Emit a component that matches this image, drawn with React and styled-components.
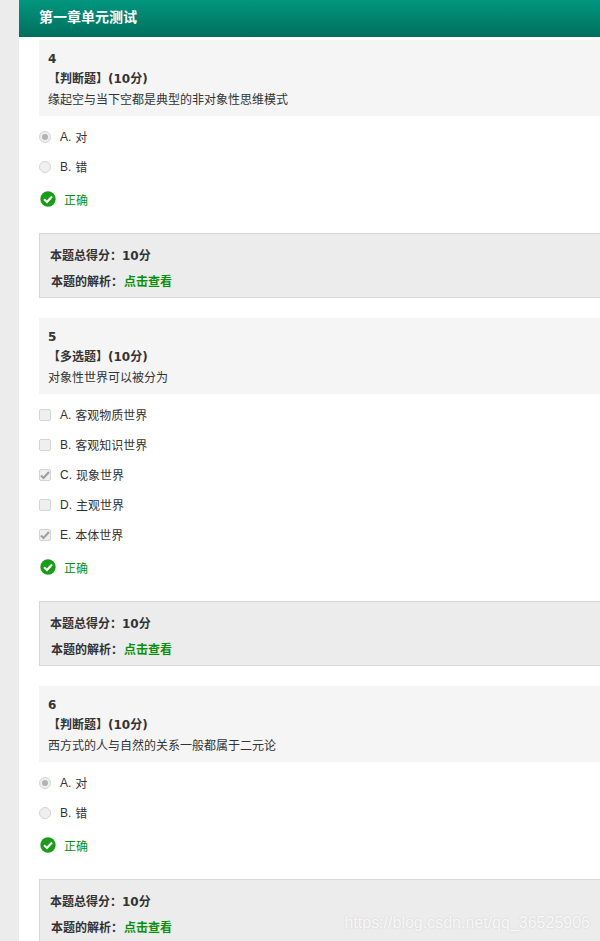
import styled, {createGlobalStyle} from 'styled-components'

const font = `"Liberation Sans", "Noto Sans CJK SC", sans-serif`
const boldFont = `"DejaVu Sans", "Noto Sans CJK SC", sans-serif`

const Global = createGlobalStyle`
	html, body {
		margin: 0;
		height: 941px;
		overflow: hidden;
		background: #fff;
	}
	body {
		font-family: ${font};
		color: #333;
	}
`

const Page = styled.div`
	position: relative;
	height: 941px;
	overflow: hidden;
	border-left: 19px solid #ececec;
	box-sizing: border-box;
`

const Header = styled.h1`
	margin: 0 0 3px;
	height: 37px;
	padding-left: 20px;
	background: linear-gradient(#01967f, #006f5d);
	color: #fff;
	font-size: 14px;
	font-weight: bold;
	line-height: 34px;
`

const List = styled.div`
	padding-left: 20px;
`

const Question = styled.section`
	margin-bottom: 20px;
`

const Head = styled.div`
	height: 76px;
	box-sizing: border-box;
	padding: 9px 9px 0;
	background: #f5f5f5;
	font-size: 12px;
	line-height: 20px;
`

const Number = styled.div`
	font-family: ${boldFont};
	font-weight: bold;
`

const Kind = styled.div`
	font-family: ${boldFont};
	font-weight: bold;
`

const Text = styled.div`
	margin-top: 1px;
`

const Options = styled.div`
	margin-top: 6px;
`

const Option = styled.div`
	display: flex;
	align-items: center;
	height: 30px;
	font-size: 12px;
`

const Control = styled.span`
	display: flex;
	align-items: center;
	justify-content: center;
	width: 10px;
	height: 10px;
	margin-right: 9px;
	border: 1px solid #d4d4d4;
	border-radius: ${({$round}) => $round ? '50%' : '2px'};
	background: #efefef;
`

const Dot = styled.span`
	width: 6px;
	height: 6px;
	border-radius: 50%;
	background: #b2b2b2;
`

const Letter = styled.span`
	margin-right: 4px;
`

const Label = styled.span`
	position: relative;
	top: -1px;
`

const Result = styled.div`
	display: flex;
	align-items: center;
	height: 34px;
	margin-bottom: 17px;
	padding-left: 1px;
	color: #0a8f0a;
	font-size: 12px;
	gap: 8px;
`

const Score = styled.div`
	height: 65px;
	box-sizing: border-box;
	padding: 9px 10px 0;
	border: 1px solid #d7d7d7;
	border-right: 0;
	background: #ececec;
	font-family: ${boldFont};
	font-size: 12px;
	font-weight: bold;
	line-height: 26px;
`

const ScoreLine = styled.div`
	& + & {
		padding-left: 1px;
	}
`

const Link = styled.span`
	margin-left: 1px;
	color: #0a8f0a;
`

const Watermark = styled.div`
	position: absolute;
	right: 10px;
	bottom: 9px;
	color: #fff;
	opacity: .6;
	font-size: 16px;
	text-shadow: 0 0 2px #bbb;
`

const Check = () =>
	<svg width="16" height="16" viewBox="0 0 16 16">
		<circle cx="8" cy="8" r="7.7" fill="#1a9c1a"/>
		<path d="M4 8.2 7 11 12 5.6" fill="none" stroke="#fff" strokeWidth="2.2"/>
	</svg>

const Tick = () =>
	<svg width="10" height="10" viewBox="0 0 10 10">
		<path d="M1 5.5 3.5 8 9 2" fill="none" stroke="#a0a0a0" strokeWidth="2.2"/>
	</svg>

const questions = [
	{
		number: 4,
		kind: '判断题',
		text: '缘起空与当下空都是典型的非对象性思维模式',
		round: true,
		options: [['A.', '对', true], ['B.', '错']],
	},
	{
		number: 5,
		kind: '多选题',
		text: '对象性世界可以被分为',
		options: [
			['A.', '客观物质世界'],
			['B.', '客观知识世界'],
			['C.', '现象世界', true],
			['D.', '主观世界'],
			['E.', '本体世界', true],
		],
	},
	{
		number: 6,
		kind: '判断题',
		text: '西方式的人与自然的关系一般都属于二元论',
		round: true,
		options: [['A.', '对', true], ['B.', '错']],
	},
]

export default () =>
	<>
		<Global/>
		<Page>
			<Header>第一章单元测试</Header>
			<List>
				{questions.map(({number, kind, text, round, options}) =>
					<Question key={number}>
						<Head>
							<Number>{number}</Number>
							<Kind>【{kind}】(10分)</Kind>
							<Text>{text}</Text>
						</Head>
						<Options>
							{options.map(([letter, label, checked]) =>
								<Option key={letter}>
									<Control $round={round}>
										{checked && (round ? <Dot/> : <Tick/>)}
									</Control>
									<Letter>{letter}</Letter>
									<Label>{label}</Label>
								</Option>
							)}
						</Options>
						<Result><Check/>正确</Result>
						<Score>
							<ScoreLine>本题总得分：10分</ScoreLine>
							<ScoreLine>本题的解析：<Link>点击查看</Link></ScoreLine>
						</Score>
					</Question>
				)}
			</List>
			<Watermark>https://blog.csdn.net/qq_36525906</Watermark>
		</Page>
	</>
